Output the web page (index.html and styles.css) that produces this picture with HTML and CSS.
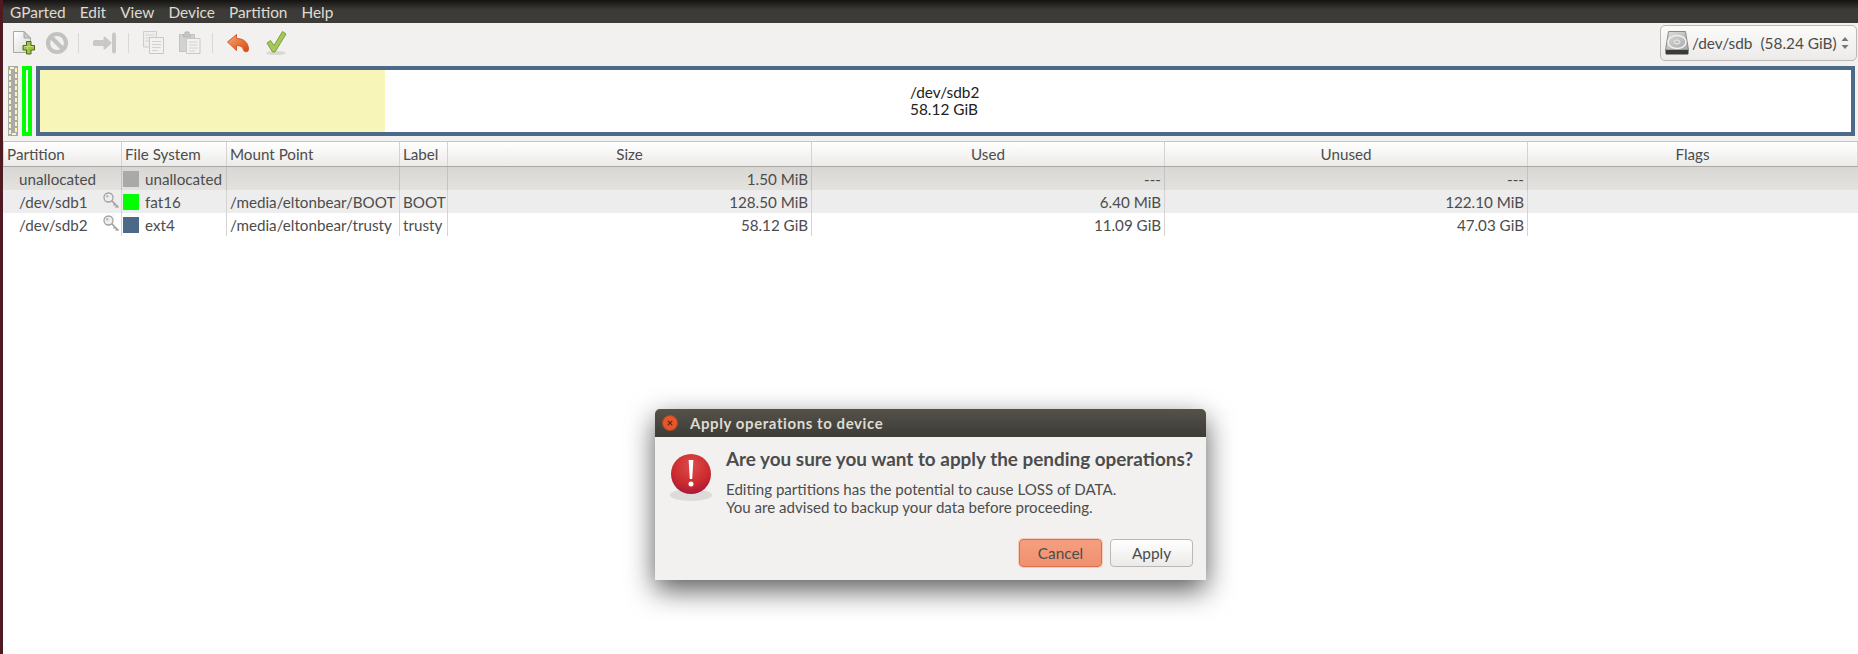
FILE: index.html
```html
<!DOCTYPE html>
<html lang="en">
<head>
<meta charset="utf-8">
<title>GParted</title>
<link rel="stylesheet" href="styles.css">
</head>
<body>
<div class="edge"></div>
<div class="app">
  <nav class="menubar">
    <span>GParted</span><span>Edit</span><span>View</span><span>Device</span><span>Partition</span><span>Help</span>
  </nav>
  <div class="toolbar">
    <svg class="tool t-new" width="24" height="24" viewBox="0 0 24 24">
      <defs><linearGradient id="pg" x1="0" y1="0" x2="1" y2="1"><stop offset="0" stop-color="#fff"/><stop offset="1" stop-color="#d8d8d6"/></linearGradient></defs>
      <path d="M1.500 .5H12L18.500 7V21.500H1.500Z" fill="url(#pg)" stroke="#a8a8a6"/>
      <path d="M12 .5V7H18.500Z" fill="#c9c9c7" stroke="#a8a8a6"/>
      <path d="M14.500 10.500H19V14.500H22.500V19H19V23H14.500V19H11V14.500H14.500Z" fill="#9cc24a" stroke="#4e6b12"/>
      <path d="M15.500 15.500V18M12 15.500H21.500" stroke="#c3dd7c" fill="none"/>
    </svg>
    <svg class="tool t-stop" width="24" height="24" viewBox="0 0 24 24">
      <circle cx="12" cy="12" r="9" fill="none" stroke="#c2c2c0" stroke-width="4.200"/>
      <path d="M5.800 5.800L18.200 18.200" stroke="#c2c2c0" stroke-width="4.200"/>
    </svg>
    <i class="sep"></i>
    <svg class="tool t-arrow" width="24" height="24" viewBox="0 0 24 24">
      <path d="M2.500 12H14" stroke="#c8c8c6" stroke-width="6" stroke-linecap="round"/>
      <path d="M11.500 6.500L17.500 12L11.500 17.500Z" fill="#c8c8c6" stroke="#c8c8c6" stroke-width="2" stroke-linejoin="round"/>
      <path d="M21 3.500V20.500" stroke="#c8c8c6" stroke-width="4" stroke-linecap="round"/>
    </svg>
    <i class="sep"></i>
    <svg class="tool t-copy" width="22" height="24" viewBox="0 0 22 24">
      <path d="M.5 .5H13.500V16H.5Z" fill="#eeedec" stroke="#cdcdcb"/>
      <path d="M2.500 4H11.500M2.500 7H11.500M2.500 10H8" stroke="#d4d4d2"/>
      <path d="M6.500 6.500H20.500V22.500H6.500Z" fill="#f2f1f0" stroke="#c8c8c6"/>
      <path d="M9 10.500H18M9 13.500H18M9 16.500H18M9 19.500H15" stroke="#d2d2d0"/>
    </svg>
    <svg class="tool t-paste" width="22" height="24" viewBox="0 0 22 24">
      <path d="M.5 3.500H15.500V20.500H.5Z" fill="#d2d2d0" stroke="#c2c2c0"/>
      <path d="M4.500 3.500H6V1H10V3.500H11.500V6H4.500Z" fill="#c6c6c4" stroke="#b8b8b6"/>
      <path d="M7.500 7.500H21V22.500H7.500Z" fill="#f2f1f0" stroke="#c8c8c6"/>
      <path d="M10 11H18.500M10 14H18.500M10 17H18.500M10 20H16" stroke="#d2d2d0"/>
    </svg>
    <i class="sep"></i>
    <svg class="tool t-undo" width="24" height="24" viewBox="0 0 24 24">
      <defs><linearGradient id="ug" x1="0" y1="0" x2="1" y2="1"><stop offset="0" stop-color="#f5ac70"/><stop offset="1" stop-color="#d8431a"/></linearGradient></defs>
      <path d="M1.500 11L10.500 3.500V7.500C17 7.500 22.500 11 22.500 18.500C22.500 21.500 17.800 21.500 17.300 18.500C16.800 15.500 14 14.500 10.500 14.500V19.500Z" fill="url(#ug)" stroke="#d9581f" stroke-width="1" stroke-linejoin="round"/>
    </svg>
    <svg class="tool t-check" width="24" height="26" viewBox="0 0 24 26">
      <ellipse cx="12" cy="23" rx="10" ry="2" fill="#d9d8d6"/>
      <path d="M3 13L6.500 10.500L10 15.500L18.500 1.500L22 4L11 22H8.500Z" fill="#a5c85a" stroke="#7f9f3a" stroke-linejoin="round"/>
    </svg>
    <div class="combo">
      <svg class="hdd" width="24" height="24" viewBox="0 0 24 24">
        <defs><linearGradient id="hg" x1="0" y1="0" x2="1" y2="1"><stop offset="0" stop-color="#dededc"/><stop offset="1" stop-color="#a6a6a4"/></linearGradient></defs>
        <path d="M3.500 .5H20.500L23.500 19H.5Z" fill="url(#hg)" stroke="#8a8a88"/>
        <ellipse cx="12" cy="11" rx="9" ry="6.500" fill="none" stroke="#f0f0ee" stroke-width="1.500"/>
        <ellipse cx="12" cy="11" rx="3" ry="2" fill="#c2c2c0" stroke="#efefed"/>
        <path d="M.5 19H23.500V22.500Q23.500 23.500 22.500 23.500H1.500Q.5 23.500 .5 22.500Z" fill="#3a3a38"/>
      </svg>
      <span class="dev">/dev/sdb</span>
      <span class="cap">(58.24 GiB)</span>
      <svg class="updown" width="8" height="12" viewBox="0 0 8 12"><path d="M.5 4L4 0L7.500 4ZM.5 8L4 12L7.500 8Z" fill="#77776f"/></svg>
    </div>
  </div>
  <div class="map">
    <svg class="un" width="10" height="70" viewBox="0 0 10 70"><rect width="10" height="70" fill="#a9a9a9"/><rect x="2" y="2" width="6" height="66" fill="none" stroke="#f7f6b8" stroke-width="2" stroke-dasharray="4 2"/></svg>
    <div class="p1"></div>
    <div class="p2">
      <div class="used"></div>
      <div class="free"><div class="lbl">/dev/sdb2<br>58.12 GiB</div></div>
    </div>
  </div>
  <div class="table">
    <div class="row head">
      <div class="c l">Partition</div><div class="c l">File System</div><div class="c l">Mount Point</div><div class="c l">Label</div><div class="c m">Size</div><div class="c m">Used</div><div class="c m">Unused</div><div class="c m">Flags</div>
    </div>
    <div class="row r1">
      <div class="c name">unallocated</div><div class="c fs"><i class="sw grey"></i>unallocated</div><div class="c l"></div><div class="c l"></div><div class="c r">1.50 MiB</div><div class="c r">---</div><div class="c r">---</div><div class="c"></div>
    </div>
    <div class="row r2">
      <div class="c name">/dev/sdb1<svg class="key" width="17" height="17" viewBox="0 0 17 17"><circle cx="5.500" cy="5.500" r="4.500" fill="#eeeeec" stroke="#a2a2a0" stroke-width="1.300"/><circle cx="4.300" cy="4.300" r="1.200" fill="#b8b8b6"/><path d="M8.500 8.500L15.500 15.500M12 12L10.500 13.500M14 14L12.500 15.500" stroke="#a2a2a0" stroke-width="1.700"/></svg></div><div class="c fs"><i class="sw green"></i>fat16</div><div class="c l">/media/eltonbear/BOOT</div><div class="c l">BOOT</div><div class="c r">128.50 MiB</div><div class="c r">6.40 MiB</div><div class="c r">122.10 MiB</div><div class="c"></div>
    </div>
    <div class="row r3">
      <div class="c name">/dev/sdb2<svg class="key" width="17" height="17" viewBox="0 0 17 17"><circle cx="5.500" cy="5.500" r="4.500" fill="#eeeeec" stroke="#a2a2a0" stroke-width="1.300"/><circle cx="4.300" cy="4.300" r="1.200" fill="#b8b8b6"/><path d="M8.500 8.500L15.500 15.500M12 12L10.500 13.500M14 14L12.500 15.500" stroke="#a2a2a0" stroke-width="1.700"/></svg></div><div class="c fs"><i class="sw blue"></i>ext4</div><div class="c l">/media/eltonbear/trusty</div><div class="c l">trusty</div><div class="c r">58.12 GiB</div><div class="c r">11.09 GiB</div><div class="c r">47.03 GiB</div><div class="c"></div>
    </div>
  </div>
</div>
<section class="dialog">
  <header class="dtitle">
    <svg class="close" width="16" height="16" viewBox="0 0 16 16"><circle cx="8" cy="8" r="7.500" fill="#e5562a" stroke="#b9451f"/><path d="M5.800 5.800L10.200 10.200M10.200 5.800L5.800 10.200" stroke="#5c2410" stroke-width="1.200"/></svg>
    <span>Apply operations to device</span>
  </header>
  <div class="dbody">
    <svg class="alert" width="44" height="52" viewBox="0 0 44 52">
      <defs><radialGradient id="ag" cx=".5" cy=".3" r=".8"><stop offset="0" stop-color="#e04a4a"/><stop offset=".6" stop-color="#c92a2e"/><stop offset="1" stop-color="#97123f"/></radialGradient></defs>
      <ellipse cx="22" cy="43" rx="21" ry="6" fill="#dcdbd9"/>
      <circle cx="22" cy="22" r="20" fill="url(#ag)"/>
      <path d="M19.600 8H24.400L23.200 27H20.800Z" fill="#fff"/>
      <circle cx="22" cy="32" r="2.500" fill="#fff"/>
    </svg>
    <div class="dtext">
      <h1>Are you sure you want to apply the pending operations?</h1>
      <p>Editing partitions has the potential to cause LOSS of DATA.<br>You are advised to backup your data before proceeding.</p>
    </div>
  </div>
  <div class="dactions">
    <button class="btn cancel">Cancel</button>
    <button class="btn">Apply</button>
  </div>
</section>
</body>
</html>
```

FILE: styles.css
```css
* { box-sizing: border-box; }
html, body { margin: 0; height: 100%; }
body {
  display: flex;
  height: 654px;
  overflow: hidden;
  background: #fff;
  font-family: "Lato", "Noto Sans", sans-serif;
  font-size: 15.4px;
  color: #4c4c4c;
}
.edge { width: 3px; flex: none; background: #4f1a22; }
.app { flex: 1; min-width: 0; display: flex; flex-direction: column; }

.menubar {
  height: 23px;
  flex: none;
  display: flex;
  align-items: center;
  gap: 14px;
  padding-left: 7px;
  color: #dfdbd2;
  background: linear-gradient(#141312 0, #3c3b37 10px);
}

.toolbar {
  height: 43px;
  flex: none;
  display: flex;
  align-items: center;
  padding-bottom: 4px;
  background: #f2f1f0;
}
.tool { flex: none; display: block; }
.t-new { margin-left: 9px; }
.t-stop { margin-left: 9px; }
.sep { flex: none; width: 1px; height: 20px; background: #d9d8d6; }
.t-stop + .sep { margin-left: 9px; }
.t-arrow { margin-left: 14px; }
.t-arrow + .sep { margin-left: 11px; }
.t-copy { margin-left: 14px; }
.t-paste { margin-left: 14px; }
.t-paste + .sep { margin-left: 11px; }
.t-undo { margin-left: 13px; }
.t-check { margin-left: 14px; }

.combo {
  margin-left: auto;
  margin-right: 1px;
  width: 197px;
  height: 36px;
  display: flex;
  align-items: center;
  padding-left: 4px;
  border: 1px solid #b9b8b6;
  border-radius: 5px;
  background: linear-gradient(#fbfbfa, #ecebea);
}
.hdd { flex: none; }
.dev { margin-left: 3px; }
.cap { margin-left: 8px; }
.updown { margin-left: auto; margin-right: 7px; }

.map {
  height: 70px;
  flex: none;
  display: flex;
  padding-left: 5px;
  padding-right: 3px;
  gap: 4px;
  background: #f2f1f0;
}
.un { flex: none; display: block; }
.p1 { flex: none; width: 10px; border: 4px solid #0f0; background: #fff; }
.p2 { flex: 1; display: flex; border: 4px solid #4c6a87; background: #fff; }
.used { width: 345px; flex: none; background: #f7f6b8; }
.free { flex: 1; display: flex; padding: 14px 0 0 525px; }
.lbl { line-height: 17px; color: #222; }

.table { padding-top: 5px; font-size: 15.2px; background: linear-gradient(#f2f1f0 5px, transparent 5px); }
.row {
  display: grid;
  grid-template-columns: 119px 105px 173px 48px 364px 353px 363px 1fr;
  height: 23px;
}
.head {
  height: 26px;
  border-top: 1px solid #c8c7c5;
  border-bottom: 1px solid #a9a8a6;
  background: linear-gradient(#fff, #ecebe9);
}
.r1 { background: linear-gradient(#d8d7d4, #e3e2df); }
.r2 { background: #ededed; }
.r3 { background: #fff; }
.c {
  display: flex;
  align-items: center;
  min-width: 0;
  white-space: nowrap;
  border-right: 1px solid #d5d4d2;
}
.head .c:first-child { border-left: 1px solid #d5d4d2; }
.row:not(.head) .c:last-child { border-right: 0; }
.r1 .c { border-right-color: #c4c3c1; }
.l { padding-left: 3px; }
.m { justify-content: center; }
.r { justify-content: flex-end; padding-right: 3px; }
.name { padding-left: 16px; position: relative; }
.fs { padding-left: 1px; gap: 6px; }
.sw { width: 16px; height: 16px; flex: none; }
.grey { background: #a9a9a9; }
.green { background: #0f0; }
.blue { background: #4c6a87; }
.key { position: absolute; right: 1px; top: 2px; }

.dialog {
  position: absolute;
  left: 655px;
  top: 409px;
  width: 551px;
  height: 171px;
  display: flex;
  flex-direction: column;
  border-radius: 5px 5px 0 0;
  background: #f2f1f0;
  box-shadow: 0 10px 28px rgba(0, 0, 0, .65);
}
.dtitle {
  height: 28px;
  flex: none;
  display: flex;
  align-items: center;
  gap: 12px;
  padding: 0 0 1px 7px;
  font-weight: 700;
  font-size: 15px;
  letter-spacing: .58px;
  color: #dfdbd2;
  border-radius: 5px 5px 0 0;
  background: linear-gradient(#56524a, #3c3b37);
}
.dbody { flex: none; display: flex; padding: 15px 0 0 14px; }
.alert { flex: none; }
.dtext { margin-left: 13px; margin-top: -5px; }
.dtext h1 { margin: 0; font-size: 18.9px; line-height: 24px; font-weight: 700; color: #4c4c4c; white-space: nowrap; }
.dtext p { margin: 10px 0 0; line-height: 17.500px; font-size: 15.1px; }
.dactions { margin-top: auto; display: flex; justify-content: flex-end; gap: 8px; padding: 0 13px 13px 0; }
.btn {
  width: 83px;
  height: 28px;
  padding: 0;
  font: inherit;
  color: #4c4c4c;
  border: 1px solid #b9b8b6;
  border-radius: 4px;
  background: linear-gradient(#fff, #ebeae9);
}
.cancel {
  border-color: #d9714e;
  background: linear-gradient(#f59f80, #f0906e);
  box-shadow: 0 0 0 1px rgba(240, 138, 104, .35);
}
```
